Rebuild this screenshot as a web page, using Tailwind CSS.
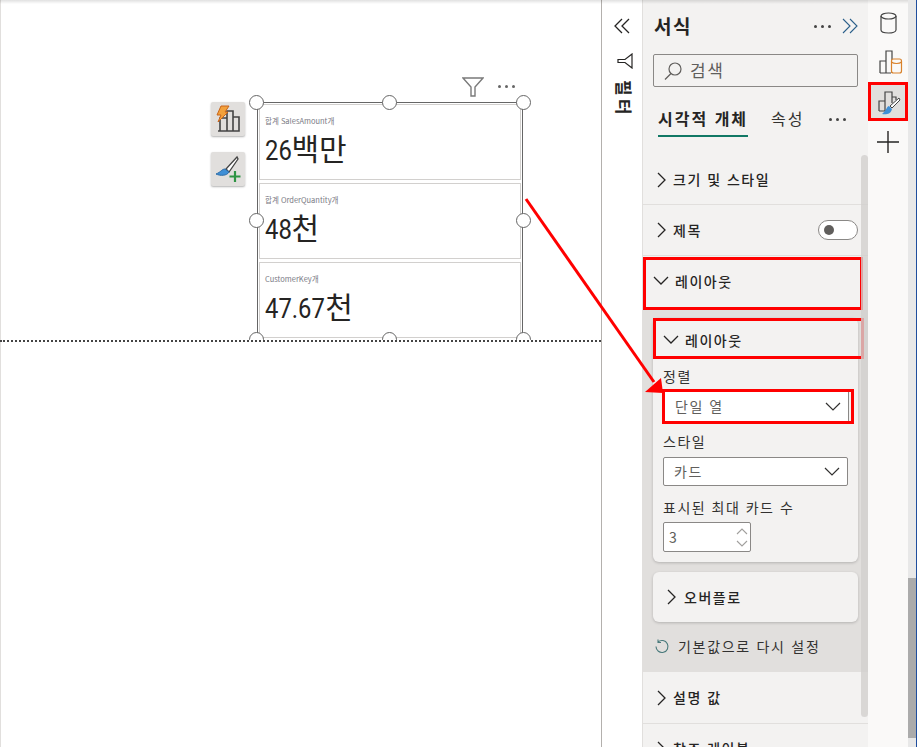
<!DOCTYPE html>
<html lang="ko">
<head>
  <meta charset="UTF-8">
  <title>Power BI 서식</title>
  <script src="https://cdn.jsdelivr.net/npm/@tailwindcss/browser@4"></script>
</head>
<body class="w-[917px] h-[747px] overflow-hidden bg-white font-['Noto_Sans_CJK_KR','Noto_Sans',sans-serif] text-[#252423]">
  <div class="relative flex w-[917px] h-[747px] overflow-hidden">

    <!-- Canvas -->
    <main class="w-[601px] shrink-0 bg-white border-l border-[#e1dfdd]">
      <div class="relative -ml-[1px] h-[342px] overflow-hidden border-b-2 border-dotted border-[#444]">
        <!-- visual header -->
        <svg class="absolute left-[462px] top-[77px]" width="22" height="20" viewBox="0 0 22 20" fill="none" stroke="#7a7a7a" stroke-width="1.4"><path d="M1 1h20l-8 9v9h-4v-9z"/></svg>
        <div class="absolute left-[498px] top-[85px] flex gap-[4px]">
          <span class="w-[3px] h-[3px] rounded-full bg-[#666]"></span>
          <span class="w-[3px] h-[3px] rounded-full bg-[#666]"></span>
          <span class="w-[3px] h-[3px] rounded-full bg-[#666]"></span>
        </div>

        <!-- floating buttons -->
        <button class="absolute left-[211px] top-[102px] w-[34px] h-[34px] bg-[#e1dfdd] rounded-[2px] shadow-[0_1px_2px_rgba(0,0,0,0.3)] flex items-center justify-center">
          <svg width="26" height="28" viewBox="0 0 26 28" fill="none">
            <path d="M3 26h21V12h-6v14M18 26V6h-6v20M12 26V13H5v13" stroke="#444" stroke-width="1.6"/>
            <path d="M6 1h8l-4 6h3L3 17l3-7H2z" fill="#f2a13c" stroke="#c8651b" stroke-width="1"/>
          </svg>
        </button>
        <button class="absolute left-[211px] top-[152px] w-[34px] h-[34px] bg-[#e1dfdd] rounded-[2px] shadow-[0_1px_2px_rgba(0,0,0,0.3)] flex items-center justify-center">
          <svg width="28" height="28" viewBox="0 0 28 28" fill="none">
            <path d="M23 2 12 14l3 3 9-13z" fill="#fff" stroke="#444" stroke-width="1.3"/>
            <path d="M11 14c-3 0-4 3-9 5 4 2 11 2 13-2z" fill="#3f8fd6" stroke="#2b6ca8" stroke-width="1"/>
            <path d="M21 16v11M15.500 21.500h11" stroke="#2e9444" stroke-width="2.200"/>
          </svg>
        </button>

        <!-- multi-row card -->
        <div class="absolute left-[257px] top-[102px] w-[266px] h-[240px] border border-[#666] bg-white p-[1px] flex flex-col gap-[3px]">
          <div class="h-[76px] shrink-0 border border-[#d2d0ce] pl-[5px] pt-[10px]">
            <p class="text-[7.500px] leading-[12px] text-[#7a7a85]">합계 SalesAmount개</p>
            <p class="text-[30px] leading-[40px] text-[#252423]"><span class="inline-block origin-left scale-x-85 -mr-[5px] font-['Roboto'] text-[28px]">26</span>백만</p>
          </div>
          <div class="h-[76px] shrink-0 border border-[#d2d0ce] pl-[5px] pt-[10px]">
            <p class="text-[7.500px] leading-[12px] text-[#7a7a85]">합계 OrderQuantity개</p>
            <p class="text-[30px] leading-[40px] text-[#252423]"><span class="inline-block origin-left scale-x-85 -mr-[5px] font-['Roboto'] text-[28px]">48</span>천</p>
          </div>
          <div class="h-[76px] shrink-0 border border-[#d2d0ce] pl-[5px] pt-[10px]">
            <p class="text-[7.500px] leading-[12px] text-[#7a7a85]">CustomerKey개</p>
            <p class="text-[30px] leading-[40px] text-[#252423]"><span class="inline-block origin-left scale-x-85 -mr-[10px] font-['Roboto'] text-[28px]">47.67</span>천</p>
          </div>
        </div>

        <!-- selection handles -->
        <span class="absolute left-[249px] top-[95px] w-[15px] h-[15px] rounded-full bg-white border border-[#666]"></span>
        <span class="absolute left-[382px] top-[95px] w-[15px] h-[15px] rounded-full bg-white border border-[#666]"></span>
        <span class="absolute left-[516px] top-[95px] w-[15px] h-[15px] rounded-full bg-white border border-[#666]"></span>
        <span class="absolute left-[249px] top-[213px] w-[15px] h-[15px] rounded-full bg-white border border-[#666]"></span>
        <span class="absolute left-[516px] top-[213px] w-[15px] h-[15px] rounded-full bg-white border border-[#666]"></span>
        <span class="absolute left-[249px] top-[332px] w-[15px] h-[15px] rounded-full bg-white border border-[#666]"></span>
        <span class="absolute left-[382px] top-[332px] w-[15px] h-[15px] rounded-full bg-white border border-[#666]"></span>
        <span class="absolute left-[516px] top-[332px] w-[15px] h-[15px] rounded-full bg-white border border-[#666]"></span>
      </div>
    </main>

    <!-- Filter pane (collapsed) -->
    <aside class="w-[42px] shrink-0 border-l border-[#b3b0ad] border-r border-r-[#e1dfdd] bg-white flex flex-col items-center pt-[17px]">
      <svg width="18" height="18" viewBox="0 0 18 18" fill="none" stroke="#252423" stroke-width="1.300"><path d="M9 2 2 9l7 7M16 2 9 9l7 7"/></svg>
      <svg class="mt-[18px] ml-[5px]" width="16" height="16" viewBox="0 0 16 16" fill="none" stroke="#252423" stroke-width="1.200"><path d="M15 1v14L8 9.500H1v-3h7z"/></svg>
      <p class="mt-[11px] ml-[4px] text-[17px] leading-[20px] font-bold tracking-[3px] [writing-mode:vertical-rl] [text-orientation:sideways]">필터</p>
    </aside>

    <!-- Format pane -->
    <section class="relative w-[225px] shrink-0 bg-[#f3f2f1] flex flex-col">
      <div class="h-[54px] shrink-0 flex items-start justify-between pt-[12px] pl-[11px] pr-[10px]">
        <h1 class="text-[19px] leading-[28px] font-bold tracking-[1.500px]">서식</h1>
        <div class="flex items-center gap-[11px] pt-[6px]">
          <div class="flex gap-[4px]">
            <span class="w-[3px] h-[3px] rounded-full bg-[#444]"></span>
            <span class="w-[3px] h-[3px] rounded-full bg-[#444]"></span>
            <span class="w-[3px] h-[3px] rounded-full bg-[#444]"></span>
          </div>
          <svg width="16" height="16" viewBox="0 0 16 16" fill="none" stroke="#2b5f8a" stroke-width="1.100"><path d="M1 1l7 7-7 7M8 1l7 7-7 7"/></svg>
        </div>
      </div>
      <div class="mx-[10px] w-[205px] h-[33px] shrink-0 border border-[#8a8886] rounded-[2px] flex items-center pl-[9px] gap-[7px] text-[17px] tracking-[1.500px] text-[#605e5c]">
        <svg width="20" height="20" viewBox="0 0 20 20" fill="none" stroke="#605e5c" stroke-width="1.200"><circle cx="12" cy="8" r="6"/><path d="M8 12.500 2 18.500"/></svg>
        <span class="-mt-[2px]">검색</span>
      </div>
      <div class="h-[68px] shrink-0 flex items-start pt-[18px] pl-[15px] text-[16px] tracking-[2px]">
        <span class="font-bold border-b-[2px] border-[#117865] h-[32px] leading-[27px]">시각적 개체</span>
        <span class="ml-[23px] leading-[27px] text-[#323130]">속성</span>
        <div class="ml-[24px] mt-[13px] flex gap-[4px]">
          <span class="w-[3px] h-[3px] rounded-full bg-[#444]"></span>
          <span class="w-[3px] h-[3px] rounded-full bg-[#444]"></span>
          <span class="w-[3px] h-[3px] rounded-full bg-[#444]"></span>
        </div>
      </div>

      <!-- sections -->
      <div class="flex flex-col text-[14px] tracking-[1.500px] font-medium">
        <div class="h-[50px] flex items-center pl-[12px] gap-[6px] border-b border-[#e1dfdd]">
          <svg width="12" height="16" viewBox="0 0 12 16" fill="none" stroke="#252423" stroke-width="1.300"><path d="M3 1l7 7-7 7"/></svg>
          <span>크기 및 스타일</span>
        </div>
        <div class="h-[51px] flex items-center pl-[12px] gap-[6px] border-b border-[#e1dfdd]">
          <svg width="12" height="16" viewBox="0 0 12 16" fill="none" stroke="#252423" stroke-width="1.300"><path d="M3 1l7 7-7 7"/></svg>
          <span>제목</span>
          <div class="ml-auto mr-[10px] w-[40px] h-[20px] rounded-full bg-white border border-[#8a8886] flex items-center pl-[5px]">
            <span class="w-[10px] h-[10px] rounded-full bg-[#605e5c]"></span>
          </div>
        </div>
        <div class="h-[54px] flex pt-[1px]">
          <div class="w-[220px] h-[53px] border-[3px] border-[#f00] flex items-center pb-[5px] pl-[7px] gap-[6px]">
            <svg width="16" height="12" viewBox="0 0 16 12" fill="none" stroke="#252423" stroke-width="1.300"><path d="M1 2l7 7 7-7"/></svg>
            <span>레이아웃</span>
          </div>
        </div>

        <!-- expanded group -->
        <div class="h-[362px] bg-[#e1dfdd] pl-[10px] pt-[8px]">
          <div class="w-[205px] h-[244px] bg-[#f3f2f1] rounded-[6px] shadow-[0_1px_3px_rgba(0,0,0,0.2)] relative">
            <div class="absolute left-0 top-0 w-[211px] h-[41px] border-[3px] border-[#f00] flex items-center pt-[3px] pl-[7px] gap-[6px]">
              <svg width="16" height="12" viewBox="0 0 16 12" fill="none" stroke="#252423" stroke-width="1.300"><path d="M1 2l7 7 7-7"/></svg>
              <span>레이아웃</span>
            </div>
            <div class="pt-[48px] pl-[10px] font-normal text-[#323130]">
              <p class="leading-[20px]">정렬</p>
              <div class="mt-[3px] -ml-[1px] w-[192px] h-[35px] border-[3px] border-[#f00]">
                <div class="w-[184px] h-full bg-white border-r border-[#8a8886] flex items-center justify-between pl-[10px] pr-[7px] text-[#605e5c]">
                  <span>단일 열</span>
                  <svg width="16" height="10" viewBox="0 0 16 10" fill="none" stroke="#323130" stroke-width="1.200"><path d="M1 1l7 7 7-7"/></svg>
                </div>
              </div>
              <p class="mt-[7px] leading-[20px]">스타일</p>
              <div class="mt-[6px] w-[185px] h-[29px] border border-[#8a8886] rounded-[2px] bg-white flex items-center justify-between pl-[10px] pr-[7px] text-[#605e5c]">
                <span>카드</span>
                <svg width="16" height="10" viewBox="0 0 16 10" fill="none" stroke="#323130" stroke-width="1.200"><path d="M1 1l7 7 7-7"/></svg>
              </div>
              <p class="mt-[11px] leading-[20px]">표시된 최대 카드 수</p>
              <div class="mt-[5px] w-[88px] h-[30px] border border-[#8a8886] rounded-[2px] bg-white flex items-center justify-between pl-[5px] pr-[2px] text-[#605e5c]">
                <span>3</span>
                <div class="flex flex-col gap-[5px]">
                  <svg width="12" height="7" viewBox="0 0 12 7" fill="none" stroke="#a19f9d" stroke-width="1.100"><path d="M1 6l5-5 5 5"/></svg>
                  <svg width="12" height="7" viewBox="0 0 12 7" fill="none" stroke="#a19f9d" stroke-width="1.100"><path d="M1 1l5 5 5-5"/></svg>
                </div>
              </div>
            </div>
          </div>
          <div class="mt-[10px] w-[205px] h-[50px] bg-[#f3f2f1] rounded-[6px] shadow-[0_1px_3px_rgba(0,0,0,0.2)] flex items-center pl-[12px] gap-[7px]">
            <svg width="12" height="16" viewBox="0 0 12 16" fill="none" stroke="#252423" stroke-width="1.300"><path d="M3 1l7 7-7 7"/></svg>
            <span>오버플로</span>
          </div>
          <div class="mt-[14px] flex items-center gap-[8px] pl-[2px] font-normal tracking-[1.700px] text-[#323130]">
            <svg width="15" height="15" viewBox="0 0 15 15" fill="none" stroke="#4a7a7c" stroke-width="1.100"><path d="M3 3a6 6 0 1 1-2 4.500M3 0.500V3.500h3"/></svg>
            <span>기본값으로 다시 설정</span>
          </div>
        </div>

        <div class="h-[52px] flex items-center pl-[12px] gap-[6px] border-b border-[#e1dfdd]">
          <svg width="12" height="16" viewBox="0 0 12 16" fill="none" stroke="#252423" stroke-width="1.300"><path d="M3 1l7 7-7 7"/></svg>
          <span>설명 값</span>
        </div>
        <div class="h-[44px] pt-[14px] flex items-start pl-[12px] gap-[6px] overflow-hidden">
          <svg class="mt-[3px]" width="12" height="16" viewBox="0 0 12 16" fill="none" stroke="#252423" stroke-width="1.300"><path d="M3 1l7 7-7 7"/></svg>
          <span>참조 레이블</span>
        </div>
      </div>

      <!-- pane scrollbar -->
      <div class="absolute left-[218px] top-[155px] w-[7px] h-[562px] rounded-full bg-[#d2d0ce]/80"></div>
    </section>

    <!-- Right pane switcher -->
    <nav class="w-[40px] shrink-0 bg-[#faf9f8] flex flex-col items-center pt-[12px]">
      <svg width="17" height="22" viewBox="0 0 17 22" fill="none" stroke="#444" stroke-width="1.200"><ellipse cx="8.500" cy="4" rx="7.500" ry="3"/><path d="M1 4v14c0 1.800 3.500 3 7.500 3s7.500-1.200 7.500-3V4"/></svg>
      <svg class="mt-[16px] ml-[6px]" width="24" height="24" viewBox="0 0 24 24" fill="none">
        <path d="M1 23V11h6v12M7 23V1h6v22M1 23h11" stroke="#444" stroke-width="1.200"/>
        <rect x="12.500" y="9" width="10" height="14" rx="2" fill="#faf9f8" stroke="#d9822b" stroke-width="1.200"/>
        <path d="M12.500 12c2 2 8 2 10 0" stroke="#d9822b" stroke-width="1.200"/>
      </svg>
      <div class="mt-[8px] w-[40px] h-[39px] border-[3px] border-[#f00] bg-[#e1dfdd] flex items-center justify-center">
        <svg width="26" height="26" viewBox="0 0 26 26" fill="none">
          <path d="M4 22V12h6v10M10 22V3h7v11M17 8h4v3M4 22h7" stroke="#444" stroke-width="1.200"/>
          <path d="M24 9 15 17l2 2 8-8z" fill="#fff" stroke="#444" stroke-width="1"/>
          <path d="M14 17c-2 0-3 5-7 8 4 1 9 0 10-5z" fill="#3f8fd6"/>
        </svg>
      </div>
      <svg class="mt-[10px]" width="22" height="22" viewBox="0 0 22 22" fill="none" stroke="#252423" stroke-width="1.400"><path d="M11 0v22M0 11h22"/></svg>
    </nav>

    <!-- Window scrollbar -->
    <div class="w-[8px] shrink-0 bg-[#e8e8e8] flex flex-col">
      <div class="mt-[578px] h-[160px] bg-[#ababab]"></div>
    </div>
    <div class="w-[1px] shrink-0 bg-[#1f4e9e]"></div>

    <!-- Top shadow of the window -->
    <div class="absolute left-0 top-0 w-[908px] h-[4px] bg-gradient-to-b from-black/12 to-transparent"></div>

    <!-- Annotation arrow -->
    <svg class="absolute left-0 top-0 pointer-events-none" width="917" height="747" fill="none">
      <path d="M526 199 L654 382" stroke="#f00" stroke-width="3"/>
      <path d="M645 392 L661 378 L663 393 Z" fill="#f00"/>
    </svg>
  </div>
</body>
</html>
